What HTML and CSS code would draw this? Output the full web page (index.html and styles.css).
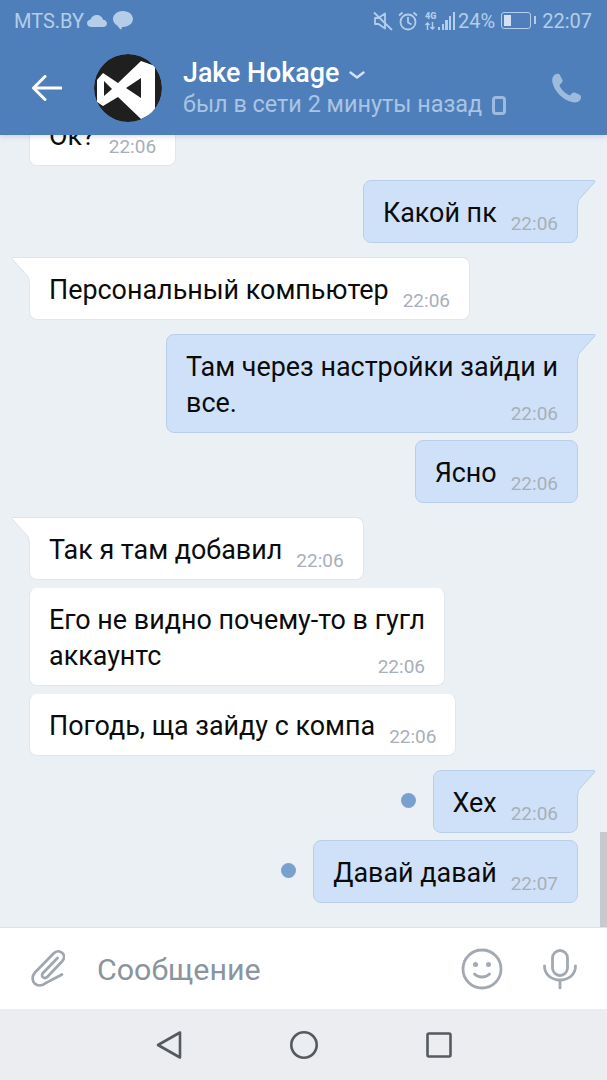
FILE: index.html
```html
<!DOCTYPE html>
<html lang="ru">
    <head>
        <meta charset="UTF-8">
        <meta name="viewport" content="width=device-width, initial-scale=1.0">
        <title>Jake Hokage</title>
        <link rel="stylesheet" href="styles.css">
    </head>
    <body>
        <svg class="defs" width="0" height="0">
            <symbol id="tailOut" viewBox="0 0 19 26">
                <path d="M0 .5H17.2C18 .5 18.4 1.200 17.900 1.900L2.500 19C1.300 20.500 1 22 1 25H0Z" fill="#cfe1f8"/>
                <path d="M0 .5H17.2C18 .5 18.400 1.200 17.900 1.900L2.500 19C1.300 20.500 1 22 1 25" fill="none" stroke="#b9cfe9"/>
            </symbol>
            <symbol id="tailIn" viewBox="0 0 19 26">
                <path d="M19 .5H1.800C1 .5.600 1.200 1.100 1.900L16.500 19C17.700 20.500 18 22 18 25H19Z" fill="#fff"/>
                <path d="M19 .5H1.800C1 .5.600 1.200 1.100 1.900L16.500 19C17.700 20.500 18 22 18 25" fill="none" stroke="#dfe3ea"/>
            </symbol>
        </svg>

        <header class="header">
            <div class="status">
                <span>MTS.BY</span>
                <svg class="icon-cloud" viewBox="0 0 20 12"><path d="M4.500 12C2 12 0 10.300 0 8.200 0 6.300 1.500 4.900 3.500 4.600 4.300 2 6.800 0 9.800 0c3.100 0 5.700 2.100 6.300 4.800C18.300 5 20 6.400 20 8.400 20 10.400 18.300 12 16 12Z"/></svg>
                <svg class="icon-chat" viewBox="0 0 20 20"><path d="M10 0C4.500 0 0 3.500 0 8c0 2.700 1.600 5 4.200 6.400L7 18c.6.800 1.400.5 1.600-.3l.4-1.800h1c5.500 0 10-3.500 10-7.900S15.500 0 10 0Z"/></svg>
                <span class="status-right">
                    <svg class="icon-mute" viewBox="0 0 20 20"><path d="M2 7h3.500L12 2.500v15L5.500 13H2Z" stroke-linejoin="round"/><path d="M1 1.500 19 19"/></svg>
                    <svg class="icon-alarm" viewBox="0 0 20 20"><circle cx="10" cy="11" r="7.500"/><path d="M10 6v5.500l3.500 2M1 4.500 4.500 1.500M19 4.500 15.500 1.500"/></svg>
                    <span class="net"><b>4G</b><svg class="icon-updown" viewBox="0 0 12 8"><path d="M3 8V1M1 3 3 1 5 3M8 0V7M6 5 8 7 10 5"/></svg></span>
                    <span class="bars"><i class="b1"></i><i class="b2"></i><i class="b3"></i><i class="b4"></i><i class="b5"></i></span>
                    <span>24%</span>
                    <span class="battery"><i></i></span>
                    <span class="clock">22:07</span>
                </span>
            </div>
            <div class="title-row">
                <svg class="icon-back" viewBox="0 0 30 26" fill="none"><path d="M29 13H2M13 1.500 1.500 13 13 24.500" stroke="#fff" stroke-width="3" stroke-linecap="round" stroke-linejoin="round"/></svg>
                <svg class="avatar" viewBox="6 6 68 68">
                    <circle cx="40" cy="40" r="34" fill="#1f1f1f"/>
                    <path fill="#fff" fill-rule="evenodd" d="M53 13 67 18V64L53 71 30 49 15 58 9 54V32L15 25 30 35ZM53 30 38 40 53 50ZM16 33V48L24 41Z"/>
                </svg>
                <div class="who">
                    <div class="name">Jake Hokage
                        <svg class="icon-chevron" viewBox="0 0 16 8" fill="none"><path d="M1.500 1.500 8 6.500l6.500-5" stroke="#d3e1f2" stroke-width="2.400" stroke-linecap="round" stroke-linejoin="round"/></svg>
                    </div>
                    <div class="seen">был в сети 2 минуты назад
                        <svg class="icon-device" viewBox="0 0 14 19" fill="none"><rect x="1.500" y="1.500" width="11" height="16" rx="2.500" stroke="#9dbbdf" stroke-width="3"/></svg>
                    </div>
                </div>
                <svg class="icon-phone" viewBox="0 0 30 30"><path d="M3 1.500C5 .3 7.200 .6 8 2.200l2.300 4.500c.6 1.200.3 2.500-.7 3.300L8.200 11.200c-.7.6-.8 1.300-.4 2.100 1.900 3.700 5 6.700 8.800 8.700.8.4 1.500.3 2.100-.3l1.300-1.400c.9-.9 2.100-1.100 3.200-.6l4 1.900c1.800.8 2.300 2.700 1.300 4.600-1.400 2.600-4.400 3.700-7.500 3.100C11 27.400 2.200 18.200.4 9.200-.2 6 .7 3 3 1.500Z" fill="#9dbbdf"/></svg>
            </div>
        </header>

        <main class="chat">
            <div class="msg in"><div class="bubble">Ок?<span class="time">22:06</span></div></div>

            <div class="msg out group"><div class="bubble tailed">Какой пк<span class="time">22:06</span><svg class="tail"><use href="#tailOut"/></svg></div></div>
            <div class="msg in group"><div class="bubble tailed">Персональный компьютер<span class="time">22:06</span><svg class="tail"><use href="#tailIn"/></svg></div></div>
            <div class="msg out group"><div class="bubble tailed">Там через настройки зайди и<br>все.<span class="time">22:06</span><svg class="tail"><use href="#tailOut"/></svg></div></div>
            <div class="msg out"><div class="bubble">Ясно<span class="time">22:06</span></div></div>
            <div class="msg in group"><div class="bubble tailed">Так я там добавил<span class="time">22:06</span><svg class="tail"><use href="#tailIn"/></svg></div></div>
            <div class="msg in"><div class="bubble">Его не видно почему-то в гугл<br>аккаунтс<span class="time">22:06</span></div></div>
            <div class="msg in"><div class="bubble">Погодь, ща зайду с компа<span class="time">22:06</span></div></div>
            <div class="msg out group"><span class="dot"></span><div class="bubble tailed">Хех<span class="time">22:06</span><svg class="tail"><use href="#tailOut"/></svg></div></div>
            <div class="msg out"><span class="dot"></span><div class="bubble">Давай давай<span class="time">22:07</span></div></div>

            <div class="scrollbar"></div>
        </main>

        <div class="composer">
            <svg class="icon-clip" viewBox="0 0 34 38" fill="none"><path d="M26.500 8 12 23c-1.500 1.700-1 3.500 0 4.300s3 1 4.500-.5L31 11.500c3-3.200 2.500-6.500.3-8.500s-6-2.500-8.800.5L4 22.500c-3.500 4-2.800 8.500-.3 11s7.500 3 11-.5L31 24.500" stroke="#9fa6ae" stroke-width="2.700" stroke-linecap="round"/></svg>
            <span class="placeholder">Сообщение</span>
            <svg class="icon-smile" viewBox="0 0 42 42" fill="none"><circle cx="21" cy="21" r="19" stroke="#a3a9b1" stroke-width="2.800"/><circle cx="14.500" cy="16.500" r="2.500" fill="#a3a9b1"/><circle cx="27.500" cy="16.500" r="2.500" fill="#a3a9b1"/><path d="M13.500 26c4 4 11 4 15 0" stroke="#a3a9b1" stroke-width="2.800" stroke-linecap="round"/></svg>
            <svg class="icon-mic" viewBox="0 0 34 40" fill="none"><rect x="9.500" y="1.500" width="15" height="25" rx="7.500" stroke="#a3a9b1" stroke-width="2.800"/><path d="M1.500 17c0 8.500 7 14 15.500 14s15.500-5.500 15.500-14M17 31v9" stroke="#a3a9b1" stroke-width="2.800" stroke-linecap="round"/></svg>
        </div>

        <nav class="navbar">
            <svg viewBox="0 0 28 30" fill="none"><path d="M25 2.500V27.500L3 15Z" stroke="#555a60" stroke-width="2.600" stroke-linejoin="round"/></svg>
            <svg viewBox="0 0 28 30" fill="none"><circle cx="14" cy="15" r="12.700" stroke="#555a60" stroke-width="2.600"/></svg>
            <svg viewBox="0 0 28 30" fill="none"><rect x="2.500" y="3.500" width="23" height="23" rx="1.500" stroke="#555a60" stroke-width="2.600"/></svg>
        </nav>
    </body>
</html>
```

FILE: styles.css
```css
* {
    margin: 0;
    padding: 0;
    box-sizing: border-box;
}
body {
    width: 607px;
    height: 1080px;
    display: flex;
    flex-direction: column;
    overflow: hidden;
    font-family: Roboto, "Noto Sans", sans-serif;
    background: #ebf0f4;
}
.defs {
    position: absolute;
}

/* header */
.header {
    height: 135px;
    flex: none;
    background: #4f7fba;
    position: relative;
    z-index: 2;
    box-shadow: 0 1px 6px rgba(40, 60, 90, 0.2);
}
.status {
    height: 41px;
    padding: 0 15px 0 14px;
    display: flex;
    align-items: center;
    font-size: 20px;
    color: #b4cde9;
}
.status svg {
    fill: #b4cde9;
}
.icon-cloud {
    width: 20px;
    height: 12px;
    margin-left: 3px;
}
.icon-chat {
    width: 20px;
    height: 20px;
    margin-left: 6px;
}
.status-right {
    margin-left: auto;
    display: flex;
    align-items: center;
}
.status .icon-mute,
.status .icon-alarm {
    width: 20px;
    height: 20px;
    fill: none;
    stroke: #b4cde9;
    stroke-width: 1.8;
}
.status .icon-alarm {
    margin-left: 5px;
}
.net {
    display: flex;
    flex-direction: column;
    align-items: center;
    width: 13px;
    margin-left: 6px;
    font-size: 9px;
    line-height: 9px;
    font-weight: 700;
}
.status .icon-updown {
    width: 13px;
    height: 8px;
    margin-top: 1px;
    fill: none;
    stroke: #b4cde9;
    stroke-width: 1.4;
}
.bars {
    display: flex;
    align-items: flex-end;
    gap: 1.500px;
    height: 18px;
    margin: 0 3px 0 1px;
}
.bars i {
    width: 2.200px;
    background: #b4cde9;
}
.b1 { height: 3px; }
.b2 { height: 6px; }
.b3 { height: 10px; }
.b4 { height: 14px; }
.b5 { height: 18px; }
.battery {
    width: 30px;
    height: 17px;
    border: 1.5px solid #b4cde9;
    border-radius: 3px;
    margin: 0 4px 0 6px;
    padding: 2px;
    position: relative;
    display: flex;
}
.battery i {
    width: 7px;
    background: #d3e1f2;
}
.battery::after {
    content: "";
    position: absolute;
    right: -6px;
    top: 3px;
    width: 2px;
    height: 8px;
    background: #b4cde9;
}
.clock {
    margin-left: 7px;
}
.title-row {
    height: 94px;
    padding: 0 25px 0 32px;
    display: flex;
    align-items: center;
}
.icon-back {
    width: 30px;
    height: 26px;
    flex: none;
    margin-top: -1px;
}
.avatar {
    width: 68px;
    height: 68px;
    flex: none;
    margin-left: 32px;
    border-radius: 50%;
}
.who {
    margin-left: 21px;
    flex: 1;
}
.name {
    font-size: 26.800px;
    line-height: 32px;
    font-weight: 500;
    color: #fff;
    display: flex;
    align-items: center;
}
.icon-chevron {
    width: 16px;
    height: 8px;
    margin-left: 10px;
    margin-top: 3px;
}
.seen {
    font-size: 23.400px;
    line-height: 30px;
    color: #a9c4e4;
    display: flex;
    align-items: center;
}
.icon-device {
    width: 14px;
    height: 19px;
    margin-left: 10px;
    margin-top: 2px;
}
.icon-phone {
    width: 30px;
    height: 30px;
    flex: none;
    margin-top: -1px;
}

/* messages */
.chat {
    flex: 1;
    min-height: 0;
    overflow: hidden;
    display: flex;
    flex-direction: column;
    justify-content: flex-end;
    padding: 0 29px 24px;
    position: relative;
}
.msg {
    display: flex;
    align-items: center;
    flex: none;
    margin-top: 7px;
}
.msg.group {
    margin-top: 14px;
}
.msg.out {
    justify-content: flex-end;
}
.bubble {
    position: relative;
    display: flow-root;
    padding: 14px 19px 11px;
    border: 1px solid #e2e6ec;
    border-top-color: #eef0f4;
    border-radius: 8px;
    background: #fff;
    font-size: 26.900px;
    line-height: 36px;
    color: #0b0b0b;
}
.out .bubble {
    background: #cfe1f8;
    border-color: #b9cfe9;
}
.in .bubble.tailed {
    border-top-left-radius: 0;
    border-top-color: #dfe3ea;
}
.out .bubble.tailed {
    border-top-right-radius: 0;
}
.time {
    float: right;
    margin: 22px 0 0 14px;
    font-size: 19px;
    line-height: 14px;
    color: #a8afb8;
}
.tail {
    position: absolute;
    top: -1px;
    width: 19px;
    height: 26px;
}
.out .tail {
    left: 100%;
}
.in .tail {
    right: 100%;
}
.dot {
    width: 15px;
    height: 15px;
    border-radius: 50%;
    background: #7aa1cd;
    margin: -2px 17px 0 0;
}
.scrollbar {
    position: absolute;
    right: 0;
    bottom: 0;
    width: 7px;
    height: 95px;
    background: #c6c9cd;
}

/* bottom */
.composer {
    height: 82px;
    flex: none;
    background: #fff;
    border-top: 1px solid #dfe3e8;
    display: flex;
    align-items: center;
    padding: 0 30px 0 31px;
}
.icon-clip {
    width: 34px;
    height: 38px;
    flex: none;
}
.placeholder {
    margin-left: 32px;
    padding-top: 2px;
    flex: 1;
    font-size: 30.400px;
    color: #8a949f;
}
.icon-smile {
    width: 42px;
    height: 42px;
}
.icon-mic {
    width: 34px;
    height: 40px;
    margin-left: 40px;
}
.navbar {
    height: 71px;
    flex: none;
    background: #ebedf0;
    display: flex;
    align-items: center;
    justify-content: center;
    gap: 107px;
}
.navbar svg {
    width: 28px;
    height: 30px;
}
```
